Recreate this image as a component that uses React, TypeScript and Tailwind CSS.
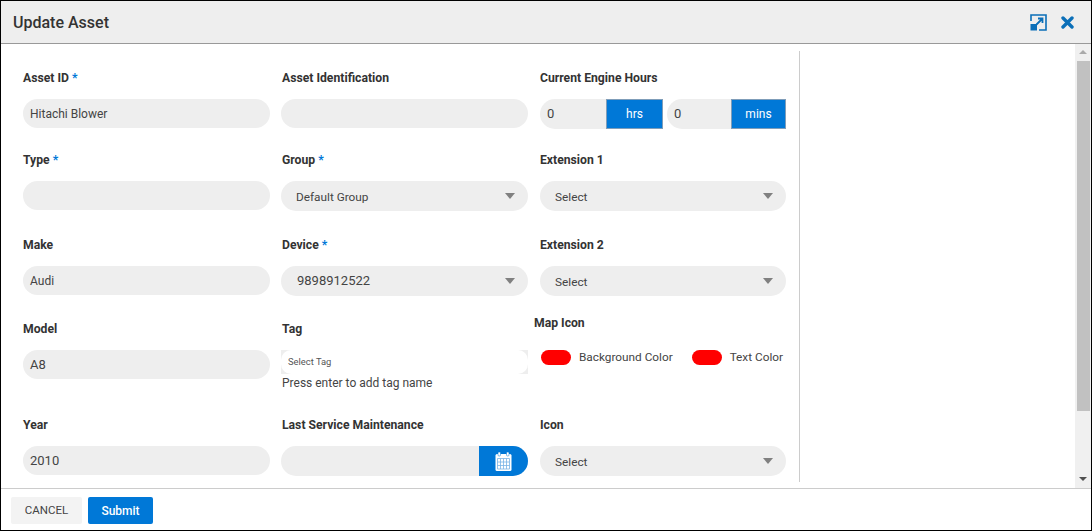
import type { ReactNode } from "react";

const blue = "bg-[#0078d7]";

function Label({ children, req }: { children: ReactNode; req?: boolean }) {
   return (
      <div className="h-4 text-[12.2px] leading-[18px] font-bold whitespace-nowrap text-[#333]">
         {children}
         {req && <span className="text-[#0078d7]"> *</span>}
      </div>
   );
}

function TextField({ label, value, req, num }: { label: string; value?: string; req?: boolean; num?: boolean }) {
   return (
      <div>
         <Label req={req}>{label}</Label>
         <div className={`mt-[14px] h-[29px] rounded-[15px] bg-[#eeeeee] px-[7px] text-[#444] ${num ? "text-[13px] leading-[29px]" : "text-[12px] leading-[31px]"}`}>
            {value}
         </div>
      </div>
   );
}

function SelectField({ label, value, req, num }: { label: string; value: string; req?: boolean; num?: boolean }) {
   return (
      <div>
         <Label req={req}>{label}</Label>
         <div className="mt-[14px] flex h-[30px] items-center justify-between rounded-[15px] bg-[#eeeeee] pr-[13px] pl-[15px]">
            <span className={`text-[#444] ${num ? "pl-px text-[13px]" : "pt-[3px] text-[11.8px]"}`}>{value}</span>
            <span className="h-0 w-0 border-x-[5.5px] border-t-[6px] border-x-transparent border-t-[#808080]" />
         </div>
      </div>
   );
}

function Duration({ value, unit, className }: { value: string; unit: string; className: string }) {
   return (
      <div className={`flex h-[30px] overflow-hidden rounded-l-[15px] bg-[#eeeeee] ${className}`}>
         <span className="flex-1 pl-[7px] text-[13px] leading-[30px] text-[#444]">{value}</span>
         <span className={`${unit === "hrs" ? "w-[57px]" : "w-[55px]"} ${blue} border border-[#7f9db9] text-center text-[12px] leading-[29px] text-white`}>
            {unit}
         </span>
      </div>
   );
}

function Swatch({ label }: { label: string }) {
   return (
      <div className="flex items-center gap-2 whitespace-nowrap">
         <span className="h-[15px] w-[30px] rounded-[8px] bg-[#ff0000]" />
         <span className="text-[11.8px] text-[#444]">{label}</span>
      </div>
   );
}

function ExpandIcon() {
   return (
      <svg width="17" height="17" viewBox="0 0 17 17" fill="none">
         <path d="M1 7V1h15v15H9" stroke="#0b6fb8" strokeWidth="1.6" />
         <rect x="0.5" y="10" width="6.5" height="6.5" fill="#0b6fb8" />
         <path d="M6.5 10.5 12 5M8 4.5h4.5V9" stroke="#0b6fb8" strokeWidth="1.8" />
      </svg>
   );
}

function CloseIcon() {
   return (
      <svg width="13" height="13" viewBox="0 0 13 13" fill="none">
         <path d="M2 2l9 9M11 2l-9 9" stroke="#0b6fb8" strokeWidth="3.4" strokeLinecap="round" />
      </svg>
   );
}

function CalendarIcon() {
   return (
      <svg width="17" height="19" viewBox="0 0 17 19">
         <rect x="0.5" y="2" width="16" height="17" rx="1.5" fill="#fff" />
         <rect x="3" y="0" width="2.5" height="4" rx="1" fill="#fff" stroke="#0078d7" strokeWidth="0.5" />
         <rect x="11.5" y="0" width="2.5" height="4" rx="1" fill="#fff" stroke="#0078d7" strokeWidth="0.5" />
         <path
            d="M2.5 6.5h12v10.5h-12zM2.5 10h12M2.5 13.5h12M5.5 6.5V17M8.5 6.5V17M11.5 6.5V17"
            fill="none"
            stroke="#7ab4e6"
            strokeWidth="0.8"
         />
      </svg>
   );
}

export default function App() {
   return (
      <div
         className="flex h-[531px] w-[1092px] flex-col overflow-hidden border border-black bg-white"
         style={{ fontFamily: "Roboto, 'Liberation Sans', sans-serif" }}
      >
         {/* header */}
         <div className="flex h-[43px] shrink-0 items-center justify-between border-b border-[#999] bg-[#eeeeee] pr-[17px] pl-3">
            <span className="pt-[2px] text-[16px] font-medium text-[#333]">Update Asset</span>
            <div className="flex items-center gap-[14px]">
               <ExpandIcon />
               <CloseIcon />
            </div>
         </div>

         {/* body */}
         <div className="flex min-h-0 flex-1">
            <div className="flex-1 pt-[7px]">
               <div className="h-[431px] w-[799px] border-r border-[#ccc] pt-[18px] pl-[22px]">
                  <div className="grid grid-cols-[247px_248px_246px] grid-rows-[82px_85px_84px_96px_60px] gap-x-[11px] [&>*:nth-child(3n+2)]:mr-px [&>*:nth-child(3n+2)>div:first-child]:pl-px">
                     <TextField label="Asset ID" req value="Hitachi Blower" />
                     <TextField label="Asset Identification" />
                     <div>
                        <Label>Current Engine Hours</Label>
                        <div className="mt-[14px] flex gap-[4px]">
                           <Duration value="0" unit="hrs" className="w-[123px]" />
                           <Duration value="0" unit="mins" className="w-[119px]" />
                        </div>
                     </div>

                     <TextField label="Type" req />
                     <SelectField label="Group" req value="Default Group" />
                     <SelectField label="Extension 1" value="Select" />

                     <TextField label="Make" value="Audi" />
                     <SelectField label="Device" req value="9898912522" num />
                     <SelectField label="Extension 2" value="Select" />

                     <TextField label="Model" value="A8" num />
                     <div>
                        <Label>Tag</Label>
                        <div className="mt-[14px] h-[24px] bg-[#eeeeee]">
                           <div className="h-full rounded-[10px] bg-white pl-[7px] text-[9.4px] leading-[24px] text-[#555]">
                              Select Tag
                           </div>
                        </div>
                        <div className="pl-px text-[12px] leading-[19px] text-[#444]">Press enter to add tag name</div>
                     </div>
                     <div className="-mt-[6px] -ml-[6px]">
                        <Label>Map Icon</Label>
                        <div className="mt-[19px] flex gap-[19px] pl-[7px]">
                           <Swatch label="Background Color" />
                           <Swatch label="Text Color" />
                        </div>
                     </div>

                     <TextField label="Year" value="2010" num />
                     <div>
                        <Label>Last Service Maintenance</Label>
                        <div className="mt-[14px] flex h-[30px] overflow-hidden rounded-[15px] bg-[#eeeeee]">
                           <span className="flex-1" />
                           <span className={`flex w-[49px] items-center justify-center ${blue}`}>
                              <CalendarIcon />
                           </span>
                        </div>
                     </div>
                     <SelectField label="Icon" value="Select" />
                  </div>
               </div>
            </div>

            {/* scrollbar */}
            <div className="flex w-[16px] shrink-0 flex-col items-center bg-[#f0f0f0] pt-[6px]">
               <span className="h-0 w-0 border-x-[4px] border-b-[4px] border-x-transparent border-b-[#aaa]" />
               <span className="mt-[7px] ml-[1px] h-[350px] w-[13px] bg-[#c1c1c1]" />
               <span className="mt-[66px] h-0 w-0 border-x-[4px] border-t-[4px] border-x-transparent border-t-[#505050]" />
            </div>
         </div>

         {/* footer */}
         <div className="flex h-[42px] shrink-0 items-start gap-[6px] border-t border-[#ccc] pt-2 pl-[10px]">
            <button className="h-[27px] w-[71px] rounded-[2px] bg-[#f3f3f3] text-[11.5px] text-[#444]">CANCEL</button>
            <button className={`h-[27px] w-[65px] rounded-[2px] ${blue} text-[12px] font-medium text-white`}>Submit</button>
         </div>
      </div>
   );
}
